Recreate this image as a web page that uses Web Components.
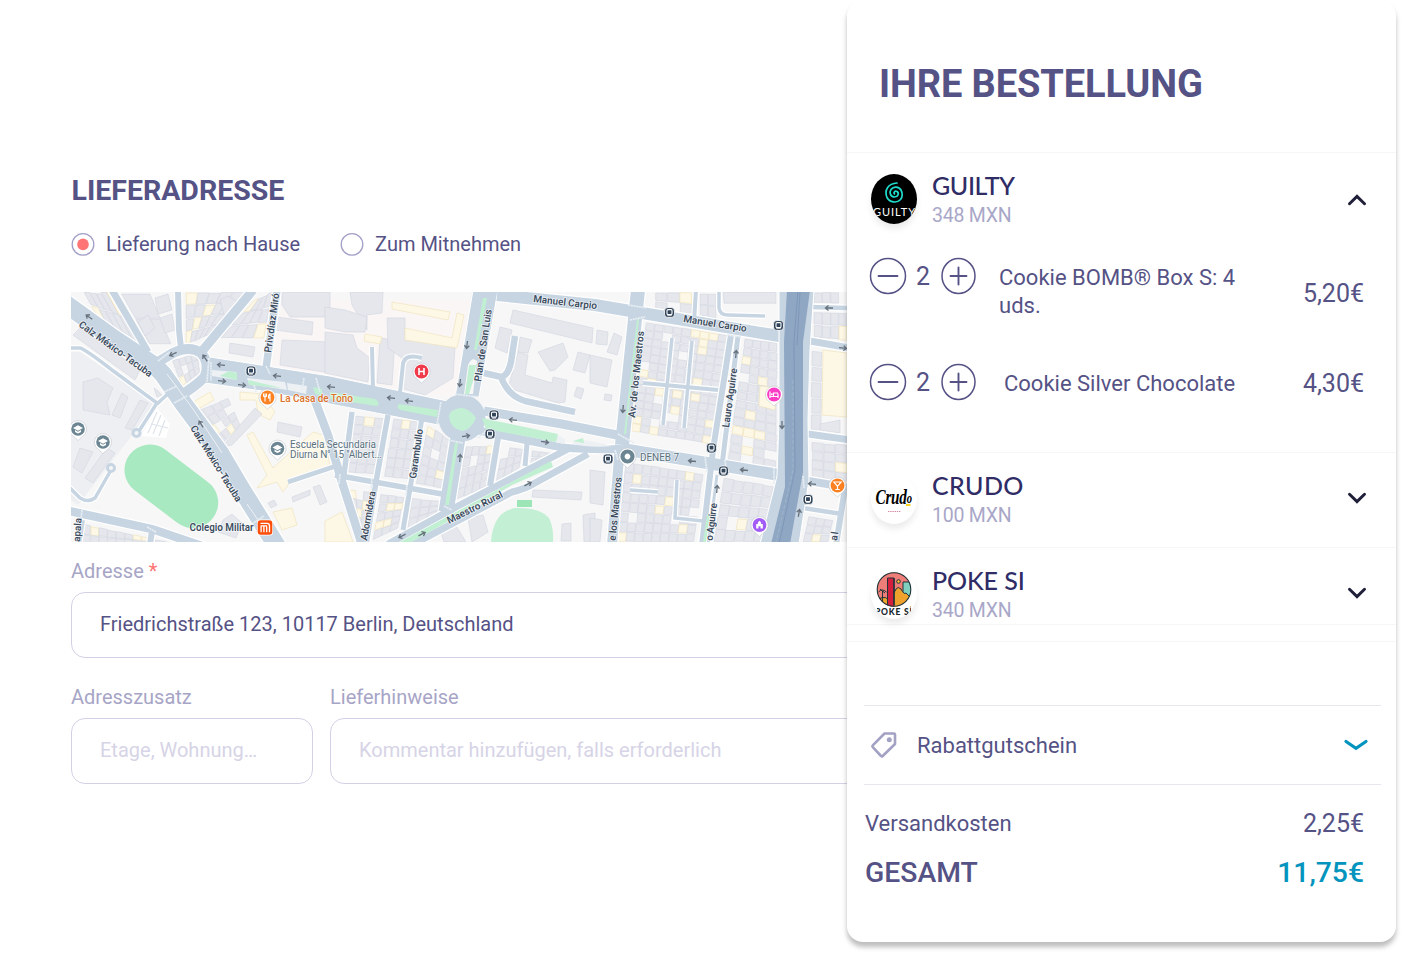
<!DOCTYPE html>
<html lang="de">
<head>
<meta charset="utf-8">
<title>Checkout</title>
<style>
body {
  margin: 0;
  background-color: #fff;
  font-family: Roboto, "Liberation Sans", sans-serif;
  color: #555285;
}
</style>
</head>
<body>
<checkout-page>
  <delivery-form slot="form"></delivery-form>
  <order-card slot="order" headline="IHRE BESTELLUNG">
    <order-vendor name="GUILTY" amount="348 MXN" open style="--height: 299px; --spacing: -0.4px">
      <logo-guilty slot="logo"></logo-guilty>
      <order-item count="2" price="5,20€" style="--name-top: 7px; --price-top: 17px">Cookie BOMB® Box S: 4 uds.</order-item>
      <order-item count="2" price="4,30€" style="--name-left: 27px; --name-top: 7px; --price-top: 1px">Cookie Silver Chocolate</order-item>
    </order-vendor>
    <order-vendor name="CRUDO" amount="100 MXN" style="--height: 94px; --spacing: 0.4px">
      <logo-crudo slot="logo"></logo-crudo>
    </order-vendor>
    <order-vendor name="POKE SI" amount="340 MXN" style="--height: 76px; --spacing: -0.1px">
      <logo-poke slot="logo"></logo-poke>
    </order-vendor>
    <order-summary slot="summary"></order-summary>
  </order-card>
</checkout-page>

<script>
/**
 * Creates a template from a string of markup.
 */
const html = (markup) => {
  const template = document.createElement('template')
  template.innerHTML = markup
  return template
}

/**
 * Base for all components, clones the template into the shadow root.
 */
class BaseElement extends HTMLElement {
  constructor () {
    super()
    this.attachShadow({ mode: 'open' })
      .appendChild(this.constructor.template.content.cloneNode(true))
  }

  setText (selector, text) {
    this.shadowRoot.querySelector(selector).textContent = text
  }
}

customElements.define('checkout-page',
  class extends BaseElement {
    static template = html(`
<style>
:host {
  display: flex;
  width: 1403px;
  height: 955px;
  overflow: hidden;
}
.form {
  width: 847px;
  flex: none;
  overflow: hidden;
}
</style>
<div class="form"><slot name="form"></slot></div>
<slot name="order"></slot>
`)
  })

customElements.define('radio-option',
  class extends BaseElement {
    static template = html(`
<style>
:host {
  display: flex;
  align-items: center;
  font-size: 20px;
  line-height: 24px;
}
svg {
  margin-right: 11px;
  margin-top: 1px;
}
.dot { display: none; }
:host([checked]) .dot { display: block; }
</style>
<svg width="24" height="24" viewBox="0 0 24 24">
  <circle cx="12" cy="12.400" r="10.800" fill="#fff" stroke="#a3a0c8" stroke-width="1.300"/>
  <circle class="dot" cx="12" cy="12.400" r="5.800" fill="#ff7575"/>
</svg>
<slot></slot>
`)
  })

customElements.define('text-field',
  class extends BaseElement {
    static template = html(`
<style>
:host {
  display: block;
  flex: none;
}
label {
  display: block;
  font-size: 20px;
  line-height: 24px;
  color: #a7a5c6;
}
.star { color: #ff7575; }
.box {
  box-sizing: border-box;
  height: 66px;
  margin-top: 9px;
  padding-left: 28px;
  border: 1.5px solid #d3d1e6;
  border-radius: 14px;
  font-size: 20px;
  line-height: 62px;
  color: #555285;
  white-space: nowrap;
}
.placeholder { color: #d6d4e6; }
</style>
<label><span class="label"></span> <span class="star"></span></label>
<div class="box"></div>
`)

    connectedCallback () {
      const value = this.getAttribute('value')
      this.setText('.label', this.getAttribute('label'))
      this.setText('.box', value || this.getAttribute('placeholder'))
      this.setText('.star', this.hasAttribute('required') ? '*' : '')
      this.shadowRoot.querySelector('.box').classList.toggle('placeholder', !value)
    }
  })

customElements.define('delivery-form',
  class extends BaseElement {
    static template = html(`
<style>
:host {
  display: block;
  padding: 174px 0 0 71px;
}
h2 {
  margin: 0 0 0 0.5px;
  font-size: 28.5px;
  line-height: 34px;
  font-weight: 700;
}
.options {
  display: flex;
  gap: 40px;
  margin: 23px 0 36px;
}
.row {
  display: flex;
  gap: 17px;
  margin-top: 27px;
}
.address { margin-top: 17px; width: 900px; }
.extra { width: 242px; }
.hints { width: 640px; }
</style>
<h2>LIEFERADRESSE</h2>
<div class="options">
  <radio-option checked>Lieferung nach Hause</radio-option>
  <radio-option>Zum Mitnehmen</radio-option>
</div>
<street-map></street-map>
<text-field class="address" label="Adresse" required value="Friedrichstraße 123, 10117 Berlin, Deutschland"></text-field>
<div class="row">
  <text-field class="extra" label="Adresszusatz" placeholder="Etage, Wohnung…"></text-field>
  <text-field class="hints" label="Lieferhinweise" placeholder="Kommentar hinzufügen, falls erforderlich"></text-field>
</div>
`)
  })

// Buildings: G = grey, Y = yellow
const BUILDINGS = [
  'G 80,328 140,370 135,380 73,335', 'G 83,382 98,378 113,388 107,402 110,415 83,410',
  'G 122,393 128,397 120,418 112,415', 'G 140,400 148,403 132,430 125,428',
  'G 80,448 93,452 82,473 73,467', 'G 107,448 115,453 93,483 85,478',
  'G 282,292 330,292 330,317 290,317 282,305', 'G 277,317 313,322 312,335 275,330',
  'G 282,340 330,342 330,373 280,365', 'G 230,343 255,347 253,357 229,353',
  'G 350,292 383,292 382,313 367,315 367,330 352,305', 'G 325,307 345,310 367,317 365,332 345,332 325,328',
  'G 325,332 353,335 357,348 370,358 368,382 325,373', 'G 380,338 395,340 392,385 377,383',
  'G 387,318 405,318 405,335 455,348 453,378 425,395 400,388 402,358 388,348',
  'Y 392,302 450,312 448,320 392,309', 'Y 405,328 452,338 457,313 464,315 457,348 405,340',
  'Y 365,334 382,337 380,344 364,341',
  'G 513,310 593,328 592,343 510,323', 'G 500,327 512,330 507,353 495,348', 'G 520,337 532,340 528,353 518,352',
  'G 518,352 528,355 525,375 552,383 553,377 567,380 565,402 558,403 508,388',
  'G 538,352 563,343 568,357 555,370 550,371', 'G 578,352 590,355 585,373 573,370', 'G 577,387 584,389 581,399 574,396',
  'G 597,330 608,332 607,345 596,344', 'G 590,355 612,360 607,387 590,383', 'G 614,333 622,337 617,355 607,352',
  'G 605,394 612,395 611,401 604,400',
  'Y 247,435 253,432 273,468 313,432 323,435 330,465 293,478 283,492 277,482 257,488 267,475',
  'G 278,422 302,427 300,437 277,432', 'Y 273,512 292,508 297,525 282,530', 'G 292,497 310,490 310,495 293,502',
  'G 313,487 320,485 327,502 320,505', 'G 268,503 274,500 277,505 271,508', 'Y 325,521 342,512 353,542 325,542',
  'G 533,490 582,492 581,500 532,497', 'G 468,518 483,515 488,532 472,542', 'G 440,530 455,524 466,542 444,542',
  'G 562,524 571,523 571,541 561,541', 'G 583,515 595,513 595,542 584,542', 'G 590,470 605,472 603,505 590,503',
  'G 590,518 602,520 600,542 590,542', 'Y 823,350 847,353 847,417 822,415', 'G 820,424 840,420 840,433 820,430',
  'Y 760,386 777,388 775,410 759,406', 'Y 190,404 210,392 214,400 193,412', 'Y 240,392 262,394 275,412 270,420 258,414 256,400 240,400',
  'G 220,300 228,296 240,303 225,318', 'G 138,322 148,315 155,328 145,336', 'G 160,318 172,314 175,330 165,333',
  'G 155,298 168,294 172,310 158,314', 'G 223,520 232,514 242,523 236,538 218,532', 'G 240,425 255,408 262,414 232,445 222,447',
  'G 154,388 158,391 162,395 157,397'
]

// Dense blocks of plots: corners (TL TR BR BL), columns, rows
const BLOCKS = [
  ['84,292 112,292 140,343 98,318', 5, 2], ['120,292 150,292 172,345 150,345', 1, 2],
  ['186,292 245,292 208,335 186,345', 5, 4], ['172,360 197,353 200,373 182,386', 4, 3],
  ['255,300 272,292 264,338 220,338', 4, 3], ['193,412 228,398 240,425 222,445', 4, 4],
  ['355,415 385,418 374,474 346,472', 3, 6], ['394,418 419,421 410,479 384,477', 3, 6],
  ['428,425 450,440 442,488 416,484', 3, 6], ['348,490 371,492 362,540 357,530', 3, 5],
  ['381,494 404,497 398,528 373,540', 3, 5], ['412,498 441,501 436,515 407,530', 3, 3],
  ['466,446 494,446 487,486 456,500', 4, 5], ['503,446 523,449 519,468 496,482', 3, 3],
  ['532,450 557,454 540,460 531,465', 3, 2],
  ['646,322 728,335 711,444 631,431', 9, 14], ['745,338 777,343 776,470 728,460', 4, 14],
  ['626,462 703,474 694,542 617,542', 9, 8], ['724,478 774,486 763,542 714,542', 5, 5],
  ['655,292 692,292 692,316 655,310', 3, 2], ['700,294 716,294 716,318 700,316', 2, 2],
  ['722,292 777,292 777,304 723,304', 1, 1],
  ['814,312 847,312 847,341 814,337', 4, 2], ['814,292 847,292 847,303 814,303', 4, 1],
  ['812,442 847,445 847,482 812,478', 3, 4], ['809,516 833,520 828,542 803,542', 3, 3],
  ['82,524 150,538 150,545 82,545', 8, 2], ['155,540 196,545 190,548 155,548', 4, 1],
  ['812,350 822,351 821,430 811,430', 1, 5]
]

// Streets: centre line, width
const STREETS = [
  ['M112,290 L148,352', 7], ['M178,290 L179,330 L181,348', 6], ['M253,290 L203,350', 9],
  ['M158,362 L173,353 Q190,345 201,353 Q210,362 205,376 Q200,383 180,396', 10],
  ['M277,290 L266,368', 7.5], ['M308,382 L328,435 L342,482 L362,545', 8.5],
  ['M352,412 L343,482', 5.5], ['M388,415 L376,482 L366,545', 5.5], ['M422,418 L403,530', 5],
  ['M335,475 L442,494', 5.5], ['M288,482 L336,466', 4.5], ['M458,438 L446,512', 15],
  ['M498,438 L490,486', 6], ['M527,444 L525,466', 5],
  ['M372,347 L373,390', 4], ['M422,358 Q405,353 403,364 L399,402', 4],
  ['M515,336 L511,362 Q508,376 501,377 L484,373 M501,377 Q508,396 525,401 L575,412', 6.5],
  ['M69,511 L152,529 L205,547', 8.5], ['M152,530 L150,545', 6], ['M82,520 L78,545', 6],
  ['M69,348 L80,348 Q85,349 112,370 L157,403 L139,431', 3.5], ['M172,390 L157,404', 3.5],
  ['M111,470 L95,498 Q88,503 80,498 L69,487', 3.5],
  ['M497,295 L595,305 L785,337', 12],
  ['M672,338 L663,425', 3.5], ['M692,341 L684,428', 3.5], ['M643,383 L718,390', 4],
  ['M696,290 L694,322', 4], ['M719,290 V308 Q720,315 728,315 L765,316', 3.5],
  ['M630,490 L658,492', 3.5], ['M677,480 L675,518 L703,521', 3.5],
  ['M731,335 L713,450 L702,545', 6], ['M738,336 L722,465', 5], ['M717,475 L708,545', 3],
  ['M810,307 L850,308', 4.5], ['M810,341 L850,348', 7], ['M808,434 L850,440', 7],
  ['M803,508 L842,514', 4.5], ['M845,488 L836,545', 6], ['M803,480 L850,488', 8],
  ['M638,290 L622,445', 14], ['M620,445 L612,545', 10],
  ['M484,411 L562,424 L622,436', 9], ['M476,430 L555,446 Q570,450 620,449', 8],
  ['M622,449 L707,463 L785,476', 12],
  ['M388,544 L458,506 L570,448', 7], ['M410,546 L512,492 Q525,489 535,483 L588,454', 7],
  ['M66,304 L113,338 L143,358 Q160,368 167,380 L183,403 L220,453 L242,490 L278,548', 18]
]

// Labels: text, x, y, angle, length, class
const LABELS = [
  ['Calz México-Tacuba', 78, 326, 35.7, 88, ''], ['Calz México-Tacuba', 190, 428, 58, 88, ''],
  ['Priv.díaz Miró', 271, 353, -82, 60, ''], ['Manuel Carpio', 533, 302, 6.5, 64, ''],
  ['Manuel Carpio', 683, 322, 9, 64, ''], ['Plan de San Luis', 481, 382, -81.5, 73, ''],
  ['Av. de los Maestros', 635, 418, -84, 87, ''], ['e los Maestros', 615.5, 541, -84.5, 64, ''],
  ['Lauro Aguirre', 729, 428, -82, 60, ''], ['o Aguirre', 712.5, 541, -83, 38, ''],
  ['Garambullo', 416, 479, -82, 50, ''], ['Adormidera', 367, 541, -80, 50, ''],
  ['Maestro Rural', 449, 524, -26.5, 61, ''], ['Colegio Militar', 189.5, 531, 0, 64, ''],
  ['apala', 80, 542, -86, 24, ''], ['al', 837, 541, -82, 9, ''],
  ['La Casa de Toño', 280, 402, 0, 73, 'food'], ['Escuela Secundaria', 290, 448, 0, 86, 'place'],
  ['Diurna N° 15 "Albert...', 290, 458, 0, 92, 'place'], ['DENEB 7', 640, 461, 0, 39, 'place']
]

// Direction arrows: x, y, angle
const ARROWS = [
  [89, 317, 215], [173, 354, 155], [205, 358, 235], [221, 365, 185], [222, 381, 5], [242, 385, 5], [277, 376, 185],
  [331, 387, 185], [391, 398, 185], [409, 401, 185], [467, 345, 97], [460, 383, 97], [201, 424, 238], [466, 436, -10],
  [460, 458, -85], [513, 420, 185], [545, 442, 8], [402, 536, 153], [422, 534, -27], [528, 484, -27], [623, 409, 95],
  [692, 461, 187], [744, 470, 187], [736, 354, -85], [717, 489, -85], [782, 425, 90], [829, 308, 180], [843, 348, 5],
  [812, 484, 185], [799, 513, -80]
]

const STOPS = [[251, 371], [494, 415], [490, 434], [608, 459], [669.5, 312.5], [778.5, 325.5], [711.5, 448], [723.5, 471], [808, 499.5]]

// Pale crossings at the junctions
const CROSSINGS = 'M158,361 L170,352 M164,392 L177,386 M174,403 L187,396 M209,358 L207,382 M211,362 L211,381 M266,366 L270,374 M254,385 L256,392 M304,378 L302,390 M316,378 L320,392 M441,402 L437,424 M455,394 L478,397 M478,438 L487,430 M448,440 L463,443 M444,506 L452,510 M628,305 L647,308 M630,320 L645,317 M618,434 L634,443 M615,450 L618,460 M705,456 L707,472 M725,460 L727,474 M774,468 L774,484 M803,476 L804,488 M340,474 L339,484 M372,478 L371,490 M407,485 L406,496 M252,524 L264,516 M256,532 L268,523 M727,335 L741,337 M82,510 L81,520 M147,527 L156,532'

customElements.define('street-map',
  class extends BaseElement {
    static template = html(`
<style>
:host {
  display: block;
  width: 776px;
  height: 250px;
}
svg { display: block; }
.G { fill: #e5e7ec; stroke: #d1d5e1; stroke-width: 0.6; }
.Y { fill: #fdf7e6; stroke: #efe1b6; stroke-width: 0.6; }
.casing path { fill: none; stroke: #fff; }
.streets path { fill: none; stroke: #c7d5e2; }
text {
  font: 600 10px Roboto, "Liberation Sans", sans-serif;
  fill: #3d4d5f;
  stroke: #fff;
  stroke-opacity: 0.7;
  stroke-width: 1.6px;
  stroke-linejoin: round;
  paint-order: stroke;
}
text.food { fill: #dd7228; font-weight: 500; }
text.place { fill: #5b727e; font-weight: 400; }
</style>
<svg width="776" height="250" viewBox="71 292 776 250">
  <defs>
    <path id="arrow" d="M-4,0 H3.5 M0.5,-2.4 L3.5,0 L0.5,2.4" fill="none" stroke="#66717c" stroke-width="1.3"/>
    <g id="stop">
      <rect x="-5" y="-5" width="10" height="10" rx="3.4" fill="#2f4359" stroke="#fff" stroke-width="0.8"/>
      <rect x="-2.5" y="-2.9" width="5" height="5" rx="1" fill="none" stroke="#fff" stroke-width="1.1"/>
      <path d="M-2.2,3.2 H2.2" stroke="#fff" stroke-width="0.8"/>
    </g>
    <path id="pin" d="M0,11.5 L-4.5,7.5 A8.6,8.6 0 1 1 4.5,7.5 Z" fill="#fff" stroke="#b7bcc4" stroke-width="0.5"/>
    <g id="school">
      <use href="#pin"/><circle r="6.8" fill="#6c8592"/>
      <path d="M0,-3.8 L5,-1 L0,1.8 L-5,-1 Z M-3,1 L0,2.7 L3,1 V3 L0,4.5 L-3,3 Z" fill="#fff"/>
    </g>
  </defs>
  <rect x="71" y="292" width="776" height="250" fill="#f7f7f7"/>
  <polygon points="71,352 80,352 155,404 140,425 78,505 71,500" fill="#eeeff3"/>
  <path d="M282,300 H470 L455,398 L270,370 Z" fill="#fbf6f6"/>
  <g class="buildings"></g>
  <path d="M157,408 L170,424 L166,438 L141,436 Z" fill="#fff"/>
  <path d="M157,412 L148,433 M161,415 L153,434 M165,420 L159,436 M151,424 L168,428" fill="none" stroke="#dfe3ea" stroke-width="1.200"/>
  <path d="M150,470 L192.7,502.5" stroke="#a8e9c1" stroke-width="51" stroke-linecap="round"/>
  <path d="M491,542 Q493,512 515,508 Q540,507 549,518 Q554,528 553,542 Z" fill="#c3f0d4"/>
  <rect x="517" y="500" width="15" height="7" fill="#9ce5b6"/>
  <g class="casing"></g>
  <path d="M210,357 L330,376 L452,402 L438,425 L330,404 L262,391 L205,383 Z M473,290 H498 L479,397 H455 Z" fill="#c7d5e2" stroke="#fff" stroke-width="1"/>
  <g class="streets"></g>
  <circle cx="136.500" cy="433" r="3.500" fill="#f7f7f7" stroke="#c7d5e2" stroke-width="3"/>
  <circle cx="111" cy="468" r="3.500" fill="#f7f7f7" stroke="#c7d5e2" stroke-width="3"/>
  <circle cx="462" cy="418" r="23.500" fill="#c7d5e2"/>
  <path d="M449,417 Q449,409 462,408 Q470,409 476,418 Q471,430 462,431 Q450,428 449,417 Z" fill="#c3f0d4"/>
  <g fill="#edf1f4">
    <path d="M212,370 L236,372 L237,380 L212,376 Z M247,378 L285,382 L287,390 L249,384 Z M287,383 L307,386 L306,394 L288,390 Z"/>
    <path d="M468,365 Q472,356 477,361 L473,394 H464 Z" fill="#f7f7f7"/>
    <path d="M557,435 Q567,438 565,444 L554,442 Z M573,442 Q580,437 612,446 Q590,448 573,444 Z"/>
  </g>
  <g fill="#c0efd2">
    <path d="M220,376 L229,371 L237,373 L237,380 Z M248,380 L282,388 L249,385 Z M313,387 L322,389 V396 L315,394 Z M330,392 L375,399 Q381,403 377,406 L330,399 Z M399,404 L438,410 L437,417 L400,410 Q396,407 399,404 Z"/>
    <path d="M483,298 H487 L477,350 H474 Z M469,365 H476 L473,381 L469,394 H465 Z"/>
    <path d="M482,418 L558,434 L556,442 L486,429 Z M573,441 L583,438 L584,443 Z"/>
    <path d="M455,443 H458 L449,505 L445,505 Z M398,543 L551,461 L553,467 L512,485 L410,543 Z"/>
    <path d="M637,319 H639 L626,434 L624,434 Z M707,515 H710 L706,542 H703 Z"/>
  </g>
  <path d="M167,374 L193,409 L222,453 M247,504 L258,520" fill="none" stroke="#edf1f5" stroke-width="1"/>
  <path d="M779,290 L814,290 L810,350 L808,420 L809,480 L799,544 H760 L777,476 L779,420 Z" fill="#c7d5e2" stroke="#fff"/>
  <path d="M787,290 H810 L803,342 L803,472 L790,544 H771 L785,487 L784,342 Z" fill="#8fa7c3"/>
  <path d="M798,290 L794,342 L795,470 L779,544 M800,292 L797,345" fill="none" stroke="#7f98b9" stroke-width="1"/>
  <path d="M793,380 L793,470 L776,542" fill="none" stroke="#a9bdd2" stroke-width="0.600" stroke-dasharray="4 2"/>
  <path class="crossings" fill="none" stroke="#e6edf3" stroke-width="1.700" stroke-dasharray="2.200 0.500"/>
  <g class="marks"></g>
  <g class="labels"></g>

  <use href="#school" x="78" y="429"/>
  <use href="#school" x="103" y="442"/>
  <use href="#school" x="277.500" y="448.500"/>
  <g transform="translate(267.500 397.500)">
    <use href="#pin"/><circle r="6.900" fill="#fb8122"/>
    <path d="M-2.500,-4 V4 M-4,-4 V-1.500 Q-2.500,0 -1,-1.500 V-4 M2.500,4 V-3.500 Q0.800,-3 1,0.500 H2.500" fill="none" stroke="#fff" stroke-width="1.100"/>
  </g>
  <g transform="translate(421.500 371.500)">
    <use href="#pin"/><circle r="6.900" fill="#ef3b4b"/>
    <path d="M-2.500,-3.500 V3.500 M2.500,-3.500 V3.500 M-2.500,0 H2.500" stroke="#fff" stroke-width="1.600"/>
  </g>
  <g transform="translate(627.500 456.500)">
    <use href="#pin"/><circle r="5" fill="none" stroke="#6c8592" stroke-width="4.200"/>
  </g>
  <g transform="translate(774 394.500)">
    <use href="#pin"/><circle r="6.900" fill="#fb3cc4"/>
    <path d="M-4,-3 V3.500 M-4,2 H4 M4,3.500 V-1 M-0.500,1.500 V-1.500 H4" fill="none" stroke="#fff" stroke-width="1.200"/><circle cx="-2.200" cy="-0.300" r="1" fill="#fff"/>
  </g>
  <g transform="translate(837.500 485.500)">
    <use href="#pin"/><circle r="6.900" fill="#fb8122"/>
    <path d="M-3.600,-3.500 H3.600 L0,0.800 Z M0,0.500 V4 M-2.200,4 H2.200" fill="none" stroke="#fff" stroke-width="1.200"/>
  </g>
  <g transform="translate(759.500 525)">
    <use href="#pin"/><circle r="6.900" fill="#a25cf5"/>
    <path d="M-3.300,3.500 V-1 H-1.600 V-2.600 L0,-4.200 L1.600,-2.600 V-1 H3.300 V3.500 H1 V1.200 H-1 V3.500 Z" fill="#fff"/>
  </g>
  <g transform="translate(265 527.500)">
    <rect x="-8" y="-8" width="16" height="16" rx="3.500" fill="#fff"/>
    <rect x="-7.300" y="-7.300" width="14.600" height="14.600" rx="3" fill="#fb4e0b"/>
    <path d="M-4.500,-4.200 H2 Q4.500,-4.200 4.500,-1.500 V4.700 M-3.900,-1 V4.700 M-1.100,-1 V4.700 M1.700,-1 V4.700 M-4.500,-1.600 H2" fill="none" stroke="#fff" stroke-width="1.300"/>
  </g>
</svg>
`)

    connectedCallback () {
      const find = (selector) => this.shadowRoot.querySelector(selector)
      find('.buildings').innerHTML = this.drawBlocks() + BUILDINGS.map((line) =>
        `<polygon class="${line[0]}" points="${line.slice(2)}"/>`).join('')
      find('.casing').innerHTML = STREETS.map(([d, w]) => `<path d="${d}" stroke-width="${w + 2.4}"/>`).join('')
      find('.streets').innerHTML = STREETS.map(([d, w]) => `<path d="${d}" stroke-width="${w}"/>`).join('')
      find('.crossings').setAttribute('d', CROSSINGS)
      find('.marks').innerHTML =
        ARROWS.map(([x, y, a]) => `<use href="#arrow" transform="translate(${x} ${y}) rotate(${a})"/>`).join('') +
        STOPS.map(([x, y]) => `<use href="#stop" x="${x}" y="${y}"/>`).join('')
      find('.labels').innerHTML = LABELS.map(([text, x, y, a, length, name]) =>
        `<text class="${name}" textLength="${length}" transform="translate(${x} ${y}) rotate(${a})">${text}</text>`).join('')
    }

    /**
     * Splits every block into plots with slightly uneven borders.
     */
    drawBlocks () {
      let seed = 7
      const random = () => (seed = (seed * 16807) % 2147483647) / 2147483647
      return BLOCKS.map(([corners, cols, rows]) => {
        const [a, b, c, d] = corners.split(' ').map((p) => p.split(',').map(Number))
        const at = (u, v) => [0, 1].map((i) =>
          ((1 - v) * ((1 - u) * a[i] + u * b[i]) + v * ((1 - u) * d[i] + u * c[i])).toFixed(1)).join()
        let out = ''
        for (let r = 0; r < rows; r++) {
          for (let n = 0; n < cols; n++) {
            const u = (n + random() * 0.06) / cols
            const u2 = (n + 0.95 + random() * 0.05) / cols
            const v = (r + random() * 0.12) / rows
            const v2 = (r + 0.92 + random() * 0.08) / rows
            const pick = random()
            if (pick < 0.04) continue
            out += `<polygon class="${pick > 0.9 ? 'Y' : 'G'}" points="${at(u, v)} ${at(u2, v)} ${at(u2, v2)} ${at(u, v2)}"/>`
          }
        }
        return out
      }).join('')
    }
  })

customElements.define('order-card',
  class extends BaseElement {
    static template = html(`
<style>
:host {
  display: block;
  flex: none;
  position: relative;
  box-sizing: border-box;
  width: 549px;
  height: 942px;
  background-color: #fff;
  border-radius: 16px;
  box-shadow: 0 5px 5px rgba(0, 0, 0, 0.26);
}
h1 {
  box-sizing: border-box;
  height: 152px;
  margin: 0;
  padding: 61px 0 0 32px;
  font-size: 38px;
  line-height: 46px;
  letter-spacing: -0.1px;
  font-weight: 700;
}
</style>
<h1></h1>
<slot></slot>
<slot name="summary"></slot>
`)

    connectedCallback () {
      this.setText('h1', this.getAttribute('headline'))
    }
  })

customElements.define('order-vendor',
  class extends BaseElement {
    static template = html(`
<style>
:host {
  display: block;
  box-sizing: content-box;
  height: var(--height);
  border-top: 1px solid #f6f6f9;
}
.head {
  display: flex;
  padding: 20px 27px 0 24px;
}
.names {
  flex: 1;
  margin: -2px 0 0 15px;
}
.name {
  font-family: Lato, "Liberation Sans", sans-serif;
  font-size: 25px;
  line-height: 28px;
  letter-spacing: var(--spacing);
  font-weight: 500;
  color: #2f2c66;
}
.amount {
  margin-top: 5px;
  font-size: 19.5px;
  letter-spacing: -0.25px;
  line-height: 24px;
  color: #a9a7c8;
}
svg { margin-top: 15px; }
:host([open]) svg {
  transform: scaleY(-1);
  margin-top: 17px;
}
.items {
  padding-top: 29px;
}
</style>
<div class="head">
  <slot name="logo"></slot>
  <div class="names">
    <div class="name"></div>
    <div class="amount"></div>
  </div>
  <svg width="24" height="20" viewBox="0 0 24 20"><path d="M4.500,6.300 L12,13.600 L19.500,6.300" fill="none" stroke="#21203a" stroke-width="3" stroke-linecap="round"/></svg>
</div>
<div class="items"><slot></slot></div>
`)

    connectedCallback () {
      this.setText('.name', this.getAttribute('name'))
      this.setText('.amount', this.getAttribute('amount'))
    }
  })

customElements.define('order-item',
  class extends BaseElement {
    static template = html(`
<style>
:host {
  display: flex;
  align-items: flex-start;
  height: 106px;
  padding: 0 32px 0 22px;
}
.count {
  width: 34px;
  font-size: 25px;
  line-height: 40px;
  text-align: center;
  text-indent: -2px;
}
.name {
  width: 245px;
  margin-left: var(--name-left, 22px);
  margin-top: var(--name-top);
  font-size: 22px;
  line-height: 28px;
}
.price {
  margin-left: auto;
  margin-top: var(--price-top, 0);
  font-size: 25px;
  line-height: 40px;
}
</style>
<svg width="38" height="38" viewBox="0 0 38 38"><g fill="none" stroke="#555285" stroke-width="1.500"><ellipse cx="19" cy="19" rx="17.500" ry="17.500"/><path d="M9.500,19 H28.500" stroke-width="1.900" stroke-linecap="round"/></g></svg>
<span class="count"></span>
<svg width="36" height="38" viewBox="0 0 36 38"><g fill="none" stroke="#555285" stroke-width="1.500"><ellipse cx="17.500" cy="19" rx="16.500" ry="17.500"/><path d="M9.500,19 H25.500 M17.500,10.500 V27.500" stroke-width="1.900" stroke-linecap="round"/></g></svg>
<span class="name"><slot></slot></span>
<span class="price"></span>
`)

    connectedCallback () {
      this.setText('.count', this.getAttribute('count'))
      this.setText('.price', this.getAttribute('price'))
    }
  })

customElements.define('order-summary',
  class extends BaseElement {
    static template = html(`
<style>
:host {
  display: block;
}
.gap {
  height: 16px;
  border-top: 1px solid #f6f6f9;
  border-bottom: 1px solid #f6f6f9;
}
.coupon {
  box-sizing: border-box;
  display: flex;
  align-items: center;
  height: 80px;
  margin: 63px 15px 0 17px;
  padding: 0 12px 0 6px;
  border-top: 1.5px solid #e8e7f0;
  border-bottom: 1.5px solid #e8e7f0;
  font-size: 22px;
}
.coupon span {
  flex: 1;
  margin-left: 19px;
}
.line {
  display: flex;
  justify-content: space-between;
  padding: 0 32px 0 18px;
  font-size: 22px;
  line-height: 30px;
}
.shipping { margin-top: 24px; }
.shipping b {
  font-size: 25px;
  font-weight: 400;
}
.total {
  margin-top: 17px;
  font-size: 28.3px;
  line-height: 34px;
  font-weight: 500;
}
.total b {
  font-weight: 500;
  color: #0494bd;
}
</style>
<div class="gap"></div>
<div class="coupon">
  <svg width="28" height="28" viewBox="0 0 28 28"><path d="M14.500,2.500 H24 Q25,2.500 25,3.500 V13 L12.700,25 Q11.900,25.800 11,25 L2.800,16.200 Q1.900,15.300 2.800,14.400 Z" fill="none" stroke="#a3a1c4" stroke-width="2.600" stroke-linejoin="round"/><circle cx="19.300" cy="8.800" r="2.500" fill="#a3a1c4"/></svg>
  <span>Rabattgutschein</span>
  <svg width="26" height="16" viewBox="0 0 26 16"><path d="M3,4.500 L13,11.300 L23,4.500" fill="none" stroke="#0494bd" stroke-width="3.200" stroke-linecap="round"/></svg>
</div>
<div class="line shipping"><span>Versandkosten</span><b>2,25€</b></div>
<div class="line total"><span>GESAMT</span><b>11,75€</b></div>
`)
  })

// Vendor logos, all 46x50
const logoStyle = `
<style>
:host {
  display: block;
  width: 46px;
  height: 50px;
  margin-top: 0.5px;
  border-radius: 23px / 25px;
  background-color: #fff;
  box-shadow: 0 5px 6px rgba(0, 0, 0, 0.08);
  overflow: hidden;
}
svg { display: block; }
</style>`

customElements.define('logo-guilty',
  class extends BaseElement {
    static template = html(`${logoStyle}
<svg width="46" height="50" viewBox="0 0 46 50">
  <rect width="46" height="50" fill="#000"/>
  <path d="M23.500,20 C22,18.500 24,16.500 26,17.500 C28.500,19 27,23 23.500,23 C19.500,23 18,18.500 20,15.500 C22.500,12 28,12.500 30,16 C31.500,19 32.300,22 29.500,25.500 C26,29.500 18.500,28.500 16,23.500 C13,16.500 17,9.500 26,9" fill="none" stroke="#1fdccb" stroke-width="1.700" stroke-linecap="round"/>
  <text x="2" y="42" textLength="42" font-family="Lato" font-size="11" fill="#fff">GUILTY</text>
</svg>`)
  })

customElements.define('logo-crudo',
  class extends BaseElement {
    static template = html(`${logoStyle}
<svg width="46" height="50" viewBox="0 0 46 50">
  <path d="M35,31 H39.500" stroke="#ffd21f" stroke-width="2"/>
  <g font-family="Liberation Serif" font-style="italic" font-weight="700" fill="#000">
    <text transform="translate(4.500 30) scale(0.760 1)" font-size="20" letter-spacing="-0.300">Crud<tspan font-size="14" dy="-1">o</tspan></text>
  </g>
  <path d="M17,37.500 H30" stroke="#d58ba0" stroke-width="1" stroke-dasharray="1.400 0.800"/>
</svg>`)
  })

customElements.define('logo-poke',
  class extends BaseElement {
    static template = html(`${logoStyle}
<svg width="46" height="50" viewBox="0 0 46 50">
  <defs><clipPath id="disc"><circle cx="23" cy="20.500" r="17"/></clipPath><clipPath id="word"><rect x="6" y="36" width="34" height="14"/></clipPath></defs>
  <g clip-path="url(#disc)" stroke="#20353b" stroke-width="1">
    <rect x="5" y="3" width="36" height="36" fill="#ef7d78"/>
    <path d="M32,13 H42 V30 H32 Z" fill="#7fd0be"/>
    <path d="M23,24 L25,20 Q27,17 30,20 Q33,26 35,24 L41,30 V40 H5 V32 Q12,26 17,30 Z" fill="#f0a32c"/>
    <path d="M16.500,9 H23 V38 H16.500 Z" fill="#d41f3c"/>
    <path d="M23,9 V36" stroke-width="1.500"/>
    <circle cx="27.500" cy="12.500" r="1.800" fill="#f7bd33"/>
    <path d="M11.500,36 V22 M7.500,23 Q11,19 15.500,23 M9,20 L14,24" fill="none"/>
  </g>
  <circle cx="23" cy="20.500" r="16.800" fill="none" stroke="#20353b" stroke-width="1.100"/>
  <g clip-path="url(#word)"><text x="4" y="46" textLength="37" font-family="Lato" font-weight="900" font-size="8.500" fill="#16262c">POKE SÍ</text></g>
</svg>`)
  })
</script>
</body>
</html>
